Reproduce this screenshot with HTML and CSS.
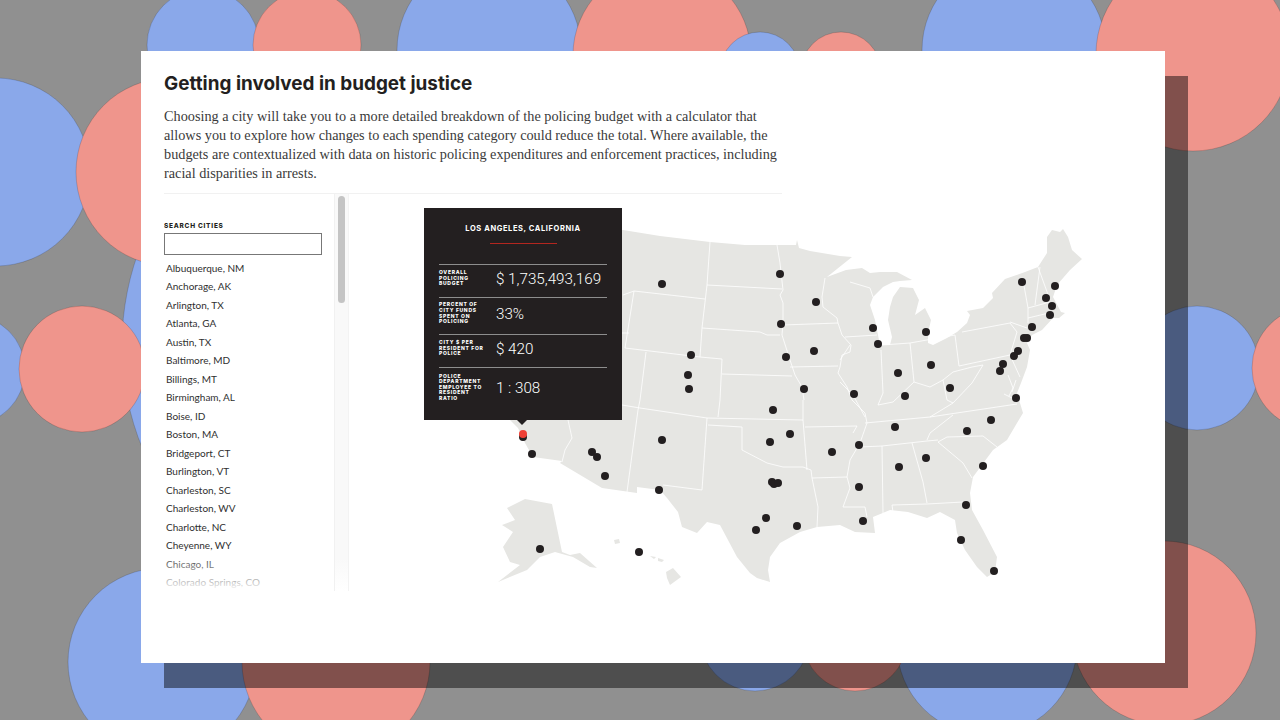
FILE: index.html
```html
<!DOCTYPE html>
<html lang="en">
<head>
  <meta charset="UTF-8" />
  <title>Getting involved in budget justice</title>
  <link rel="stylesheet" href="styles.css">
</head>
<body>

  <!-- background circles -->
  <svg class="backdrop" width="1280" height="720" viewBox="0 0 1280 720">
    <g class="blue">
      <circle cx="394" cy="345" r="272" />
      <circle cx="203" cy="45" r="56" />
      <circle cx="489" cy="50" r="92" />
      <circle cx="1014" cy="50" r="92" />
      <circle cx="-4" cy="172" r="94" />
      <circle cx="-30" cy="370" r="55" />
      <circle cx="1197" cy="368" r="62" />
      <circle cx="162" cy="662" r="94" />
      <circle cx="755" cy="636" r="55" />
      <circle cx="987" cy="645" r="90" />
    </g>
    <g class="red">
      <circle cx="307" cy="45" r="54" />
      <circle cx="662" cy="55" r="89" />
      <circle cx="841" cy="72" r="40" />
      <circle cx="1193" cy="54" r="97" />
      <circle cx="170" cy="172" r="94" />
      <circle cx="82" cy="369" r="63" />
      <circle cx="1314" cy="368" r="62" />
      <circle cx="336" cy="662" r="94" />
      <circle cx="855" cy="639" r="52" />
      <circle cx="1164" cy="633" r="92" />
    </g>
    <g class="blue">
      <circle cx="760" cy="72" r="40" />
    </g>
  </svg>

  <main class="card">
    <div class="intro">
      <h1>Getting involved in budget justice</h1>
      <p>Choosing a city will take you to a more detailed breakdown of the policing budget with a calculator that allows you to explore how changes to each spending category could reduce the total. Where available, the budgets are contextualized with data on historic policing expenditures and enforcement practices, including racial disparities in arrests.</p>
    </div>

    <div class="explorer">
      <aside class="sidebar">
        <label class="search-label" for="citySearch">Search cities</label>
        <input class="search-input" type="text" id="citySearch" />
        <ul class="city-list">
          <li>Albuquerque, NM</li>
          <li>Anchorage, AK</li>
          <li>Arlington, TX</li>
          <li>Atlanta, GA</li>
          <li>Austin, TX</li>
          <li>Baltimore, MD</li>
          <li>Billings, MT</li>
          <li>Birmingham, AL</li>
          <li>Boise, ID</li>
          <li>Boston, MA</li>
          <li>Bridgeport, CT</li>
          <li>Burlington, VT</li>
          <li>Charleston, SC</li>
          <li>Charleston, WV</li>
          <li>Charlotte, NC</li>
          <li>Cheyenne, WY</li>
          <li>Chicago, IL</li>
          <li>Colorado Springs, CO</li>
        </ul>
      </aside>

      <div class="scroll-track"><div class="scroll-thumb"></div></div>

      <div class="map">
        <svg class="us-map" width="816" height="397" viewBox="349 194 816 397">
          <g class="land">
            <path d="M623 230 L660 236 L710 242 L745 245 L777 245 L796 245 L797 240 L799 248 L810 251 L822 253 L840 256 L852 257 L827 277 L846 270 L862 268 L870 273 L880 272 L897 272 L912 280 L900 281 L893 282 L883 287 L873 297 L870 305 L875 320 L878 335 L880 345 L890 345 L892 337 L888 320 L890 307 L893 297 L900 287 L913 288 L919 300 L915 315 L925 308 L931 320 L928 333 L928 343 L933 345 L947 338 L957 332 L967 323 L970 315 L967 311 L983 308 L993 298 L992 293 L1005 279 L1025 272 L1038 267 L1047 253 L1047 237 L1052 230 L1060 232 L1063 229 L1068 237 L1072 250 L1082 259 L1070 270 L1057 285 L1053 297 L1061 312 L1065 313 L1059 318 L1053 318 L1042 330 L1032 335 L1027 343 L1030 350 L1027 367 L1021 383 L1017 393 L1023 413 L1017 423 L1007 440 L993 450 L973 477 L970 493 L972 510 L983 530 L997 557 L995 572 L987 577 L977 567 L965 550 L957 533 L955 520 L940 512 L927 518 L908 512 L890 510 L873 517 L875 533 L855 532 L840 525 L817 527 L800 532 L780 543 L770 557 L768 570 L770 582 L757 578 L750 573 L737 557 L720 525 L707 522 L697 533 L682 527 L678 512 L667 498 L660 490 L637 487 L637 493 L602 488 L560 463 L562 461 L533 457 L525 443 L518 428 L510 420 L480 340 L470 260 L510 215 Z" />
            <path d="M507 508 L525 499 L552 504 L562 552 L570 555 L580 553 L597 568 L590 567 L573 557 L555 552 L540 557 L527 570 L498 582 L520 565 L510 562 L503 547 L513 532 L502 525 L515 520 Z" />
            <path d="M666 572 L673 568 L681 577 L670 585 L667 578 Z" />
            <path d="M614 540 L619 539 L620 543 L615 544 Z" />
            <path d="M650 556 L656 557 L654 559 Z" />
            <path d="M658 558 L664 560 L662 562 L658 561 Z" />
          </g>
          <g class="borders">
            <path d="M710 242 L707 285 L702 328 L700 357" />
            <path d="M707 285 L782 289" />
            <path d="M702 328 L760 332 L767 335 L780 335" />
            <path d="M777 245 L780 263 L783 290 L780 295 L783 303 L783 323 L782 335 L790 360 L795 375 L802 387 L804 400" />
            <path d="M825 278 L822 297 L823 307 L837 318 L838 323 L842 335 L851 345 L850 352 L842 355 L840 367 L838 373 L847 387 L852 400 L865 413 L867 423 L860 443 L850 460 L847 477 L850 488 L843 507 L865 507 L867 517" />
            <path d="M783 325 L838 323" />
            <path d="M790 367 L838 366" />
            <path d="M845 337 L877 335" />
            <path d="M850 282 L870 288 L873 297" />
            <path d="M634 291 L705 299" />
            <path d="M634 291 L625 348 L700 357 L722 359 L720 400 L718 417" />
            <path d="M623 295 L634 291" />
            <path d="M646 352 L640 400 L638 410 L627 492" />
            <path d="M620 333 L629 333" />
            <path d="M722 374 L792 376" />
            <path d="M622 405 L640 408 L707 418 L803 420" />
            <path d="M568 420 L572 438 L565 450 L562 462" />
            <path d="M707 418 L702 490 L663 485" />
            <path d="M708 425 L742 427 L742 450 L767 463 L783 467 L803 467 L811 470 L812 478 L818 507 L817 527" />
            <path d="M803 400 L803 420 L807 470" />
            <path d="M812 478 L847 477" />
            <path d="M805 427 L857 426 L853 433" />
            <path d="M865 423 L930 417 L1017 404" />
            <path d="M860 447 L882 446 L927 441 L938 440" />
            <path d="M882 446 L883 513" />
            <path d="M912 443 L923 482 L927 503" />
            <path d="M892 505 L893 512 M892 505 L927 504 L963 502" />
            <path d="M938 442 L963 463 L972 478" />
            <path d="M938 442 L947 437 L983 436 L997 447" />
            <path d="M927 440 L930 433 L953 415" />
            <path d="M881 350 L883 393 L878 405 L893 402 L914 382 L930 387 L943 380 L947 400 L953 403 L972 383 L983 365" />
            <path d="M882 345 L910 343 L955 335" />
            <path d="M910 343 L914 382" />
            <path d="M955 335 L959 366 L1010 355 L1020 377" />
            <path d="M962 332 L1010 323 L1017 332 L1010 355" />
            <path d="M943 380 L953 372 L972 367 L983 365" />
            <path d="M953 403 L930 417" />
            <path d="M850 345 L840 360 M840 382 L853 395 L865 417" />
            <path d="M1023 280 L1028 308 L1028 323" />
            <path d="M1040 267 L1035 305" />
            <path d="M1038 267 L1050 300" />
            <path d="M1028 308 L1050 302" />
            <path d="M1028 318 L1053 312" />
            <path d="M1010 322 L1027 328" />
            <path d="M1008 375 L1013 388 L1009 396 M1016 380 L1012 392 M1004 394 L1016 400" />
          </g>
          <g class="dots">
            <circle cx="662" cy="284" r="4" />
            <circle cx="780" cy="274" r="4" />
            <circle cx="816" cy="302" r="4" />
            <circle cx="781" cy="324" r="4" />
            <circle cx="814" cy="351" r="4" />
            <circle cx="786" cy="357" r="4" />
            <circle cx="691" cy="355" r="4" />
            <circle cx="688" cy="375" r="4" />
            <circle cx="689" cy="389" r="4" />
            <circle cx="804" cy="389" r="4" />
            <circle cx="854" cy="394" r="4" />
            <circle cx="1022" cy="282" r="4" />
            <circle cx="1055" cy="286" r="4" />
            <circle cx="1046" cy="298" r="4" />
            <circle cx="1052" cy="306" r="4" />
            <circle cx="1050" cy="315" r="4" />
            <circle cx="1032" cy="327" r="4" />
            <circle cx="1024" cy="338" r="4" />
            <circle cx="1027" cy="338" r="4" />
            <circle cx="1018" cy="351" r="4" />
            <circle cx="1014" cy="356" r="4" />
            <circle cx="1003" cy="364" r="4" />
            <circle cx="1000" cy="371" r="4" />
            <circle cx="926" cy="332" r="4" />
            <circle cx="873" cy="328" r="4" />
            <circle cx="878" cy="344" r="4" />
            <circle cx="931" cy="365" r="4" />
            <circle cx="898" cy="373" r="4" />
            <circle cx="950" cy="388" r="4" />
            <circle cx="905" cy="396" r="4" />
            <circle cx="1016" cy="398" r="4" />
            <circle cx="523" cy="437" r="4" />
            <circle cx="532" cy="454" r="4" />
            <circle cx="592" cy="452" r="4" />
            <circle cx="597" cy="457" r="4" />
            <circle cx="605" cy="476" r="4" />
            <circle cx="662" cy="440" r="4" />
            <circle cx="659" cy="490" r="4" />
            <circle cx="540" cy="549" r="4" />
            <circle cx="639" cy="552" r="4" />
            <circle cx="773" cy="410" r="4" />
            <circle cx="790" cy="434" r="4" />
            <circle cx="770" cy="442" r="4" />
            <circle cx="832" cy="452" r="4" />
            <circle cx="859" cy="445" r="4" />
            <circle cx="895" cy="427" r="4" />
            <circle cx="967" cy="431" r="4" />
            <circle cx="991" cy="420" r="4" />
            <circle cx="926" cy="458" r="4" />
            <circle cx="899" cy="467" r="4" />
            <circle cx="983" cy="466" r="4" />
            <circle cx="859" cy="487" r="4" />
            <circle cx="772" cy="482" r="4" />
            <circle cx="774" cy="484" r="4" />
            <circle cx="778" cy="483" r="4" />
            <circle cx="766" cy="518" r="4" />
            <circle cx="756" cy="530" r="4" />
            <circle cx="797" cy="526" r="4" />
            <circle cx="863" cy="521" r="4" />
            <circle cx="966" cy="505" r="4" />
            <circle cx="961" cy="540" r="4" />
            <circle cx="994" cy="571" r="4" />
            <circle class="active" cx="523" cy="434" r="4" />
          </g>
        </svg>

        <div class="tooltip">
          <h2>Los Angeles, California</h2>
          <div class="tooltip-rule"></div>
          <div class="stat stat-budget">
            <span class="stat-label">Overall policing budget</span>
            <span class="stat-value">$ 1,735,493,169</span>
          </div>
          <div class="stat stat-percent">
            <span class="stat-label">Percent of city funds spent on policing</span>
            <span class="stat-value">33%</span>
          </div>
          <div class="stat stat-resident">
            <span class="stat-label">City $ per resident for police</span>
            <span class="stat-value">$ 420</span>
          </div>
          <div class="stat stat-ratio">
            <span class="stat-label">Police department employee to resident ratio</span>
            <span class="stat-value">1 : 308</span>
          </div>
        </div>
      </div>
    </div>
  </main>

</body>
</html>
```

FILE: styles.css
```css
:root {
  --ink: #231f20;
  --land: #e6e6e3;
  --blue: #8aa8ea;
  --red: #ef958c;
}

html, body {
  height: 100%;
}

body {
  margin: 0;
  background: #909090;
  overflow: hidden;
  font-family: 'Lato', sans-serif;
  color: var(--ink);
}

.backdrop {
  position: absolute;
  top: 0;
  left: 0;
}

.backdrop circle {
  stroke: rgba(0, 0, 0, 0.15);
  stroke-width: 1;
}

.backdrop .blue circle {
  fill: var(--blue);
}

.backdrop .red circle {
  fill: var(--red);
}

.card {
  position: relative;
  box-sizing: border-box;
  width: 1024px;
  height: 612px;
  margin: 51px 0 0 141px;
  padding: 22px 0 0 23px;
  background: #fff;
  box-shadow: 23px 25px 0 rgba(0, 0, 0, 0.46);
}

.intro {
  width: 618px;
  padding-bottom: 10px;
  border-bottom: 1px solid #f1f1f1;
}

h1 {
  margin: 0 0 13px;
  font-family: 'Inter', sans-serif;
  font-size: 18.9px;
  line-height: 21px;
  font-weight: 700;
}

.intro p {
  margin: 0;
  font-family: 'Liberation Serif', serif;
  font-size: 14.25px;
  line-height: 19px;
  color: #3a3a3a;
}

.explorer {
  position: relative;
  display: flex;
  height: 397px;
}

.sidebar {
  position: relative;
  box-sizing: border-box;
  width: 171px;
  padding-top: 28px;
  border-right: 1px solid #f1f1f1;
  overflow: hidden;
}

.sidebar::after {
  content: '';
  position: absolute;
  left: 0;
  right: 0;
  bottom: 0;
  height: 40px;
  background: linear-gradient(rgba(255, 255, 255, 0), rgba(255, 255, 255, 0.7) 78%, #fff 100%);
}

.search-label {
  display: block;
  font-family: 'Inter', sans-serif;
  font-size: 6.5px;
  line-height: 8px;
  font-weight: 800;
  letter-spacing: 0.75px;
  text-transform: uppercase;
}

.search-input {
  display: block;
  box-sizing: border-box;
  width: 158px;
  height: 22px;
  margin: 3px 0 0;
  padding: 0;
  border: 1px solid #777;
  border-radius: 0;
  background: #fff;
}

.city-list {
  list-style: none;
  margin: 3.5px 0 0;
  padding: 0 0 0 2px;
}

.city-list li {
  font-size: 10px;
  line-height: 18.5px;
  color: #2f2f2f;
  white-space: nowrap;
}

.scroll-track {
  position: relative;
  box-sizing: border-box;
  width: 14px;
  padding: 2px 3px 0;
  background: linear-gradient(#f9f9f9 92%, #fff);
  border-right: 1px solid #f3f3f3;
}

.scroll-thumb {
  width: 7px;
  height: 107px;
  border-radius: 4px;
  background: #c4c4c4;
}

.map {
  position: relative;
  flex: 1;
}

.us-map {
  display: block;
}

.land path {
  fill: var(--land);
}

.borders path {
  fill: none;
  stroke: #fff;
  stroke-width: 0.8;
  stroke-linejoin: round;
}

.dots circle {
  fill: var(--ink);
}

.dots .active {
  fill: #ee3f35;
}

.tooltip {
  position: absolute;
  top: 14px;
  left: 75px;
  box-sizing: border-box;
  width: 198px;
  height: 212px;
  padding: 0 15px;
  background: var(--ink);
  color: #fff;
}

.tooltip::after {
  content: '';
  position: absolute;
  left: 93px;
  bottom: -5px;
  border-left: 5px solid transparent;
  border-right: 5px solid transparent;
  border-top: 5px solid var(--ink);
}

.tooltip h2 {
  margin: 0;
  padding-top: 16px;
  font-family: 'Inter', sans-serif;
  font-size: 7.5px;
  line-height: 10px;
  font-weight: 700;
  letter-spacing: 0.6px;
  text-align: center;
  text-transform: uppercase;
}

.tooltip-rule {
  width: 67px;
  height: 1px;
  margin: 9px auto 20px;
  background: #b3261f;
}

.stat {
  display: flex;
  align-items: center;
  box-sizing: border-box;
  padding-bottom: 5px;
  border-top: 1px solid #8d8d8d;
}

.stat-budget {
  height: 33px;
}

.stat-percent {
  height: 37px;
}

.stat-resident {
  height: 33px;
}

.stat-ratio {
  height: 40px;
  padding-bottom: 0;
}

.stat-label {
  flex: 0 0 47px;
  margin-right: 10px;
  font-family: 'Inter', sans-serif;
  font-size: 5px;
  line-height: 5.6px;
  font-weight: 800;
  letter-spacing: 0.7px;
  text-transform: uppercase;
}

.stat-value {
  font-family: 'Roboto', sans-serif;
  font-size: 15.2px;
  font-weight: 300;
  white-space: nowrap;
}
```
